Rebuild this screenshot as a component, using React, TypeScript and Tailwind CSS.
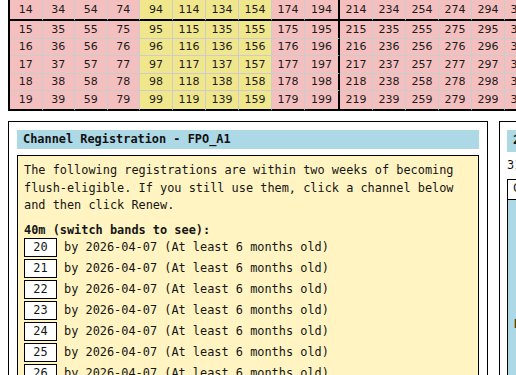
import React from 'react';

const mono = { fontFamily: '"DejaVu Sans Mono", "Liberation Mono", monospace' };

const offsets = Array.from({ length: 20 }, (_, i) => i * 20);
const rows = [14, 15, 16, 17, 18, 19];
const channels = Array.from({ length: 20 }, (_, i) => 20 + i);

const cellWidth = (i: number) => {
  if (i < 4) return 'w-[32.5px]';
  if (i === 9) return 'w-[35px] border-r-2 border-r-black';
  return 'w-[33px]';
};

const cellBg = (i: number) => (i >= 4 && i <= 7 ? 'bg-[#f0e68c]' : 'bg-[#f4bfbf]');

const BandTable = () => (
  <div className="ml-[8px] border-l-2 border-black font-['DejaVu_Sans',sans-serif] text-[11px] text-[#1c1c1c]">
    {rows.map((r, ri) => {
      const first = ri === 0;
      const last = ri === rows.length - 1;
      const rowH = first ? 'h-[21px] border-b-2 border-b-black' : last ? 'h-[19.5px] border-b-2 border-b-black' : 'h-[17.5px] border-b border-b-[#cccccc]';
      return (
        <div key={r} className="flex">
          {offsets.map((o, i) => (
            <div
              key={o}
              className={`${cellWidth(i)} ${cellBg(i)} ${rowH} shrink-0 border-r border-r-[#cccccc] flex items-center justify-center leading-none`}
            >
              {r + o}
            </div>
          ))}
        </div>
      );
    })}
  </div>
);

const RegistrationPanel = () => (
  <div className="w-[480px] shrink-0 border border-black p-[8px]" style={mono}>
    <div className="h-[19px] bg-[#add8e6] px-[6px] flex items-center text-[11.9px] font-bold text-[#111]">
      Channel Registration - FPO_A1
    </div>
    <div className="mt-[6px] border border-black bg-[#fff4c2] px-[6px] pt-[6px] pb-[10px] text-[11.9px] leading-[17.5px] text-[#151515]">
      <p>
        The following registrations are within two weeks of becoming
        <br />
        flush-eligible. If you still use them, click a channel below
        <br />
        and then click Renew.
      </p>
      <p className="mt-[7px] font-bold">40m (switch bands to see):</p>
      <div className="-mt-[1px] flex flex-col">
        {channels.map((c) => (
          <div key={c} className="h-[21px] flex items-start">
            <button className="w-[33px] h-[19px] border border-black bg-white flex items-center justify-center leading-none text-[11.9px] text-[#151515]" style={mono}>
              {c}
            </button>
            <span className="ml-[7px] h-[19px] flex items-center">by 2026-04-07 (At least 6 months old)</span>
          </div>
        ))}
      </div>
    </div>
  </div>
);

const SidePanel = () => (
  <div className="w-[300px] shrink-0 border border-black py-[8px] px-[7px]" style={mono}>
    <div className="h-[22px] bg-[#add8e6] px-[6px] flex items-center text-[11.9px] font-bold text-[#111]">
      2m Registrations
    </div>
    <p className="mt-[5px] text-[11.9px] leading-[17.5px] text-[#151515]">31 channels registered</p>
    <div className="mt-[4px] border border-black text-[11.9px]">
      <div className="h-[20px] border-b border-black px-[5px] flex items-center text-[#151515]">Channel</div>
      <div className="h-[260px] bg-[#add8e6] px-[6px] pt-[116px] text-[#5a3a14] font-bold">Repeater</div>
    </div>
  </div>
);

export default function App() {
  return (
    <div className="w-[516px] h-[375px] overflow-hidden bg-white">
      <BandTable />
      <div className="mt-[10.5px] ml-[8px] flex gap-[11px]">
        <RegistrationPanel />
        <SidePanel />
      </div>
    </div>
  );
}
